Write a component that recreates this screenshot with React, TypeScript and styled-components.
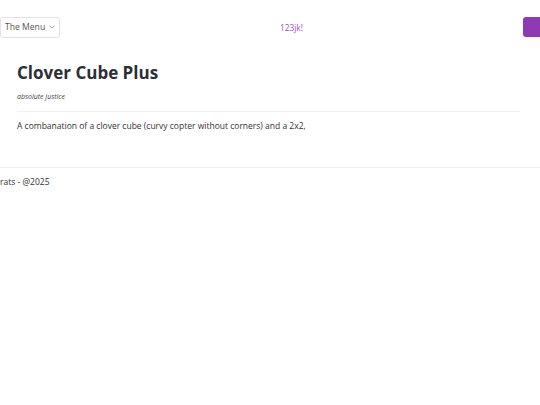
import React from "react";
import styled, { createGlobalStyle } from "styled-components";

const Global = createGlobalStyle`
    html, body {
        margin: 0;
        padding: 0;
        background: #fff;
        font-family: "Open Sans", "Liberation Sans", sans-serif;
        color: #333;
    }
`;

const Header = styled.div`
    display: flex;
    align-items: center;
    justify-content: space-between;
    padding-top: 17px;
    height: 20px;
`;

const MenuButton = styled.button`
    display: flex;
    align-items: center;
    gap: 4px;
    width: 60px;
    height: 21px;
    padding: 0 0 0 4px;
    border: 1px solid #e2e2e2;
    border-radius: 3px;
    background: #fff;
    color: #555;
    font-family: inherit;
    font-size: 8.6px;
    box-sizing: border-box;
`;

const Brand = styled.div`
    color: #a24ec4;
    font-size: 8.3px;
`;

const ActionButton = styled.div`
    width: 20px;
    height: 20px;
    margin-right: -3px;
    border-radius: 3px;
    background: #8e3ab3;
`;

const Main = styled.main`
    padding: 0 20px 35px 17px;
    border-bottom: 1px solid #f0f0f0;
`;

const Title = styled.h1`
    margin: 25px 0 0;
    font-size: 17px;
    font-weight: 700;
    line-height: 22px;
    color: #2c2f36;
`;

const Subtitle = styled.div`
    margin-top: 8px;
    font-size: 7px;
    line-height: 10px;
    font-style: italic;
    color: #444;
    padding-bottom: 9px;
    border-bottom: 1px solid #f0f0f0;
`;

const Description = styled.p`
    margin: 8px 0 0;
    font-size: 8.5px;
    line-height: 12px;
    color: #333;
`;

const Footer = styled.footer`
    padding-top: 8px;
    font-size: 8.5px;
    line-height: 12px;
    color: #333;
`;

const Chevron = () => (
    <svg width="6" height="4" viewBox="0 0 6 4" fill="none" stroke="#888" strokeWidth="0.8">
        <path d="M0.5 0.8 L3 3.2 L5.5 0.8" />
    </svg>
);

export default function App() {
    return (
        <>
            <Global />
            <Header>
                <MenuButton>
                    The Menu <Chevron />
                </MenuButton>
                <Brand>123jk!</Brand>
                <ActionButton />
            </Header>
            <Main>
                <Title>Clover Cube Plus</Title>
                <Subtitle>absolute justice</Subtitle>
                <Description>
                    A combanation of a clover cube (curvy copter without corners) and a 2x2,
                </Description>
            </Main>
            <Footer>rats - @2025</Footer>
        </>
    );
}
